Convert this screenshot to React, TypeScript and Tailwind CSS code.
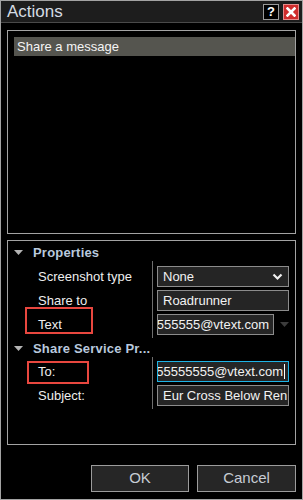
import React from "react";

const font = { fontFamily: '"Liberation Sans", Arial, sans-serif' };

const Caret = () => (
  <svg width="9" height="6" viewBox="0 0 9 6" className="shrink-0">
    <path d="M0 0 L9 0 L4.5 5 Z" fill="#b4b4b4" />
  </svg>
);

const SectionHeader = ({ title }: { title: string }) => (
  <div className="flex h-[17px] items-center pl-[6px]">
    <Caret />
    <span className="ml-[10px] text-[13px] font-bold tracking-[0.2px] text-[#b9c9dd]">{title}</span>
  </div>
);

const Field = ({
  children,
  focused,
  className = "",
}: {
  children: React.ReactNode;
  focused?: boolean;
  className?: string;
}) => (
  <div
    className={`flex h-[21px] min-w-0 items-center overflow-hidden whitespace-nowrap border bg-[#252525] px-[5px] text-[13px] text-[#f2f2f2] ${
      focused ? "border-[#1eb4e6]" : "border-[#8c8c8c]"
    } ${className}`}
  >
    {children}
  </div>
);

const Label = ({ text }: { text: string }) => (
  <div className="flex h-[21px] items-center pl-[30px] text-[13px] text-[#eeeeee]">{text}</div>
);

export default function App() {
  return (
    <div
      className="relative flex h-[500px] w-[303px] flex-col overflow-hidden border border-[#a3a3a3] bg-black"
      style={font}
    >
      {/* title bar */}
      <div className="flex h-[22px] shrink-0 items-center border-b border-[#4a4a4a] bg-[#1d1d1d] pl-[6px] pr-[3px]">
        <span className="text-[17px] leading-none text-[#d4dbe2]">Actions</span>
        <div className="ml-auto flex items-center gap-[4px]">
          <div className="flex h-[16px] w-[16px] items-center justify-center border border-[#9a9a9a] bg-black text-[13px] font-bold leading-none text-white">
            ?
          </div>
          <div className="flex h-[16px] w-[16px] items-center justify-center border border-[#e58a8a] bg-[#d02c2c]">
            <svg width="10" height="10" viewBox="0 0 10 10">
              <path d="M1.5 1.5 L8.5 8.5 M8.5 1.5 L1.5 8.5" stroke="#fff" strokeWidth="2.6" strokeLinecap="square" />
            </svg>
          </div>
        </div>
      </div>

      <div className="flex flex-1 flex-col px-[6px] pt-[7px]">
        {/* actions list */}
        <div className="h-[204px] shrink-0 border border-[#a3a3a3] pl-[6px] pt-[6px]">
          <div className="flex h-[19px] items-center bg-[#55554f] pl-[3px] text-[13px] text-[#f4f4f4]">
            Share a message
          </div>
        </div>

        {/* properties */}
        <div className="relative mt-[6px] h-[205px] shrink-0 border border-[#a3a3a3] pt-[3px]">
          <SectionHeader title="Properties" />
          <div className="grid grid-cols-[144px_minmax(0,1fr)]">
            <div className="flex flex-col gap-[3px] pt-[5px]">
              <Label text="Screenshot type" />
              <Label text="Share to" />
              <Label text="Text" />
            </div>
            <div className="flex min-w-0 flex-col gap-[3px] border-l border-[#6e6e6e] pb-[3px] pl-[4px] pr-[6px] pt-[5px]">
              <Field>
                <span>None</span>
                <svg width="11" height="8" viewBox="0 0 11 8" className="ml-auto">
                  <path d="M1.5 1.5 L5.5 5.5 L9.5 1.5" fill="none" stroke="#f0f0f0" strokeWidth="2.2" />
                </svg>
              </Field>
              <Field>Roadrunner</Field>
              <div className="flex items-center">
                <Field className="w-[117px] shrink-0 justify-end pr-[4px]">555555@vtext.com</Field>
                <svg width="9" height="6" viewBox="0 0 9 6" className="ml-[6px]">
                  <path d="M0 0 L9 0 L4.5 5 Z" fill="#3c3c3c" />
                </svg>
              </div>
            </div>
          </div>

          <div className="mt-[2px]">
            <SectionHeader title="Share Service Pr..." />
          </div>
          <div className="grid grid-cols-[144px_minmax(0,1fr)]">
            <div className="flex flex-col gap-[3px] pt-[4px]">
              <Label text="To:" />
              <Label text="Subject:" />
            </div>
            <div className="flex min-w-0 flex-col gap-[3px] border-l border-[#6e6e6e] pb-[3px] pl-[4px] pr-[6px] pt-[4px]">
              <Field focused className="justify-end pr-[3px]">
                <span>555555555@vtext.com</span>
                <span className="ml-[1px] h-[15px] w-[1px] shrink-0 bg-white" />
              </Field>
              <Field className="justify-start">Eur Cross Below Ren</Field>
            </div>
          </div>

          {/* annotation boxes */}
          <div className="absolute left-[17px] top-[66px] h-[27px] w-[68px] border-2 border-[#e8473f]" />
          <div className="absolute left-[19px] top-[120px] h-[23px] w-[62px] border-2 border-[#e8473f]" />
        </div>

        {/* buttons */}
        <div className="mt-[20px] flex justify-end gap-[8px]">
          <button className="h-[27px] w-[98px] border border-[#9c9c9c] bg-[#262626] text-[15px] text-[#c6ccd4]">
            OK
          </button>
          <button className="h-[27px] w-[99px] border border-[#9c9c9c] bg-[#262626] text-[15px] text-[#c6ccd4]">
            Cancel
          </button>
        </div>
      </div>
    </div>
  );
}
